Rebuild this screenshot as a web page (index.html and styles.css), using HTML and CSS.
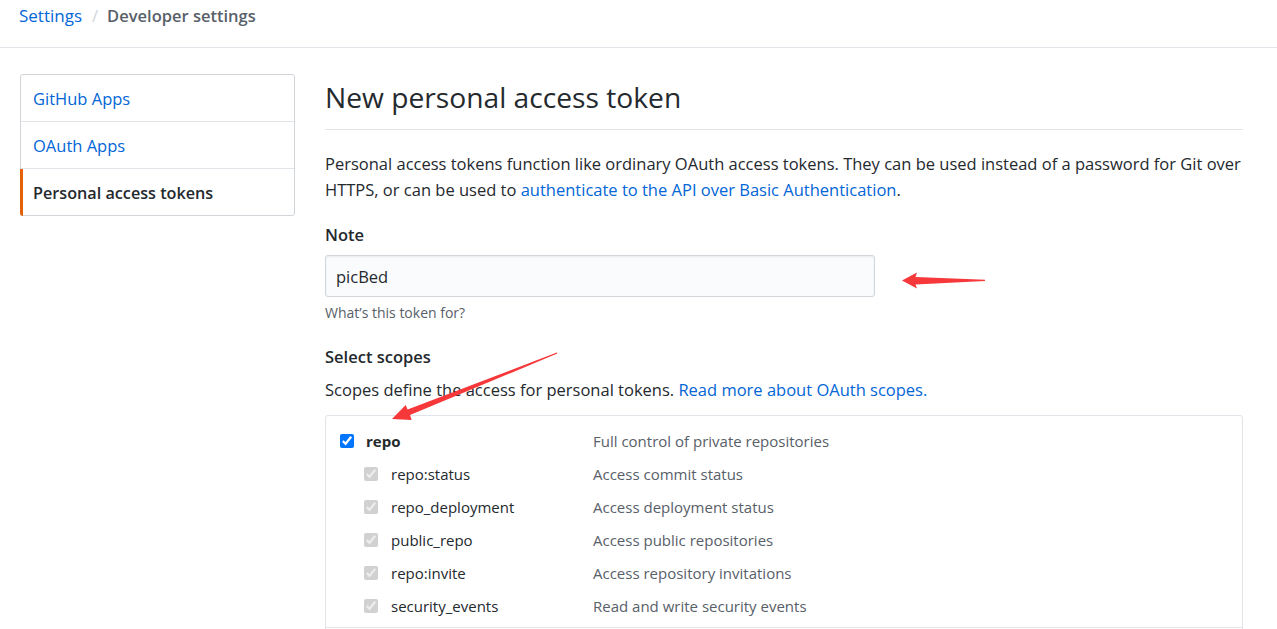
FILE: index.html
```html
<!DOCTYPE html>
<html lang="en">
<head>
<meta charset="utf-8">
<title>New personal access token</title>
<link rel="stylesheet" href="styles.css">
</head>
<body>
<header class="topbar">
  <nav class="breadcrumb">
    <a class="crumb-link" href="#">Settings</a>
    <span class="crumb-sep">/</span>
    <span class="crumb-current">Developer settings</span>
  </nav>
</header>

<div class="layout">
  <aside class="sidebar">
    <a class="side-item" href="#">GitHub Apps</a>
    <a class="side-item" href="#">OAuth Apps</a>
    <a class="side-item active" href="#">Personal access tokens</a>
  </aside>

  <main class="content">
    <h1 class="page-title">New personal access token</h1>
    <p class="intro">Personal access tokens function like ordinary OAuth access tokens. They can be used instead of a password for Git over HTTPS, or can be used to <a href="#">authenticate to the API over Basic Authentication</a>.</p>

    <label class="field-label" for="note">Note</label>
    <input class="note-input" id="note" type="text" value="picBed">
    <p class="hint">What’s this token for?</p>

    <h2 class="field-label scopes-title">Select scopes</h2>
    <p class="scopes-intro">Scopes define the access for personal tokens. <a href="#">Read more about OAuth scopes.</a></p>

    <div class="scopes-box">
      <div class="scope-group">
        <div class="scope-row">
          <label class="scope-name parent"><input type="checkbox" checked><span>repo</span></label>
          <span class="scope-desc">Full control of private repositories</span>
        </div>
        <div class="scope-row">
          <label class="scope-name child"><input type="checkbox" checked disabled><span>repo:status</span></label>
          <span class="scope-desc">Access commit status</span>
        </div>
        <div class="scope-row">
          <label class="scope-name child"><input type="checkbox" checked disabled><span>repo_deployment</span></label>
          <span class="scope-desc">Access deployment status</span>
        </div>
        <div class="scope-row">
          <label class="scope-name child"><input type="checkbox" checked disabled><span>public_repo</span></label>
          <span class="scope-desc">Access public repositories</span>
        </div>
        <div class="scope-row">
          <label class="scope-name child"><input type="checkbox" checked disabled><span>repo:invite</span></label>
          <span class="scope-desc">Access repository invitations</span>
        </div>
        <div class="scope-row">
          <label class="scope-name child"><input type="checkbox" checked disabled><span>security_events</span></label>
          <span class="scope-desc">Read and write security events</span>
        </div>
      </div>
    </div>
  </main>
</div>

<svg class="annotations" width="1277" height="629" viewBox="0 0 1277 629" aria-hidden="true">
  <polygon class="arrow" points="902,280.5 917,272.5 915.5,277 985,279.8 985,281 915.5,284.5 917,288.5"/>
  <polygon class="arrow" points="392,419 405.7,404.9 407.6,409.4 556.8,352.6 557.3,353.6 410,415 411.7,420"/>
</svg>
</body>
</html>
```
FILE: styles.css
```css
* { box-sizing: border-box; }

html, body {
  margin: 0;
  background: #fff;
}

body {
  font-family: "Open Sans", "Noto Sans", sans-serif;
  font-size: 16.5px;
  line-height: 26px;
  color: #24292e;
  position: relative;
  overflow: hidden;
  height: 629px;
}

a { color: #0366d6; text-decoration: none; }

/* top breadcrumb bar */
.topbar {
  height: 48px;
  border-bottom: 1px solid #e1e4e8;
  padding-left: 19px;
}
.breadcrumb {
  display: flex;
  align-items: center;
  height: 32px;
  font-size: 16.5px;
}
.crumb-link { color: #0366d6; font-size: 17px; }
.crumb-sep {
  color: #d1d5da;
  margin: 0 9px 0 10px;
}
.crumb-current {
  color: #586069;
  font-weight: 600;
}

/* page layout */
.layout {
  display: flex;
  align-items: flex-start;
  gap: 30px;
  padding: 26px 0 0 20px;
}

.sidebar {
  width: 275px;
  flex: none;
  display: flex;
  flex-direction: column;
  border: 1px solid #d1d5da;
  border-radius: 3px;
}
.side-item {
  display: block;
  height: 47px;
  line-height: 48px;
  padding-left: 12px;
  border-bottom: 1px solid #e1e4e8;
  color: #0366d6;
  position: relative;
}
.side-item:last-child { border-bottom: 0; height: 46px; }
.side-item.active {
  color: #24292e;
  font-weight: 600;
  font-size: 16.2px;
}
.side-item.active::before {
  content: "";
  position: absolute;
  left: -1px;
  top: 0;
  bottom: -1px;
  width: 3px;
  background: #e36209;
  border-bottom-left-radius: 3px;
}

.content {
  width: 918px;
  flex: none;
}

.page-title {
  margin: 0;
  padding: 2px 0 11px;
  font-size: 28.2px;
  line-height: 42px;
  font-weight: 400;
  border-bottom: 1px solid #e1e4e8;
}

.intro {
  margin: 21px 0 0;
}

.field-label {
  display: block;
  margin: 19px 0 0;
  font-size: 16.5px;
  line-height: 26px;
  font-weight: 600;
}

.note-input {
  display: block;
  margin-top: 7px;
  width: 550px;
  height: 42px;
  padding: 0 10px;
  font-family: inherit;
  font-size: 16.5px;
  color: #24292e;
  background: #fafbfc;
  border: 1px solid #d1d5da;
  border-radius: 3px;
  box-shadow: inset 0 1px 2px rgba(27,31,35,.075);
  outline: none;
}

.hint {
  margin: 6px 0 0;
  font-size: 14px;
  line-height: 20px;
  color: #586069;
}

.scopes-title { margin-top: 21px; }

.scopes-intro {
  margin: 7px 0 0;
}

.scopes-box {
  margin-top: 12px;
  border: 1px solid #e1e4e8;
  border-radius: 3px;
  font-size: 15px;
  padding-bottom: 40px;
}

.scope-group {
  padding: 8px 0 5px;
  border-bottom: 1px solid #e1e4e8;
}

.scope-row {
  display: grid;
  grid-template-columns: 267px 1fr;
  height: 33px;
  align-items: center;
}

.scope-name {
  display: flex;
  align-items: center;
  gap: 12px;
  color: #24292e;
}
.scope-name.parent { padding-left: 14px; font-weight: 700; }
.scope-name.parent input { accent-color: #0075ff; }
.scope-name.child { padding-left: 38px; gap: 13px; }

.scope-name input {
  width: 14px;
  height: 14px;
  margin: 0;
  flex: none;
}

.scope-desc { color: #586069; }

/* red screenshot annotations */
.annotations {
  position: absolute;
  top: 0;
  left: 0;
  pointer-events: none;
}
.arrow { fill: #f6383b; }
```
